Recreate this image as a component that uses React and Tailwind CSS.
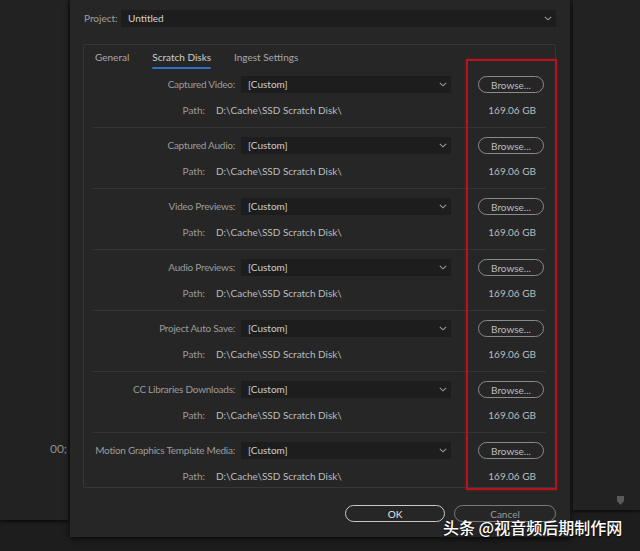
import React from "react";

const rows = [
  "Captured Video:",
  "Captured Audio:",
  "Video Previews:",
  "Audio Previews:",
  "Project Auto Save:",
  "CC Libraries Downloads:",
  "Motion Graphics Template Media:",
];

const Chevron = () => (
  <svg width="8" height="5" viewBox="0 0 8 5" className="shrink-0">
    <path d="M0.8 0.8 L4 3.8 L7.2 0.8" fill="none" stroke="#9a9a9a" strokeWidth="1.1" />
  </svg>
);

const DiskRow = ({ label, last }) => (
  <div className={`flex flex-col shrink-0 ${last ? "" : "border-b border-[#343434]"} mx-[9px] h-[61px]`}>
    <div className="flex items-center h-[17px] mt-[9px]">
      <div className="w-[142px] flex justify-end text-[#9c9c9c] whitespace-nowrap tracking-[-0.25px]">
        <span>{label}</span>
      </div>
      <div className="ml-[6px] w-[210px] h-[17px] bg-[#1d1d1d] flex items-center justify-between pl-[7px] pr-[4px] text-[#cfcfcf]">
        <span>[Custom]</span>
        <Chevron />
      </div>
      <button className="ml-[27px] w-[66px] h-[17px] rounded-full border border-[#8a8a8a] text-[#bdbdbd] flex items-center justify-center leading-none">
        Browse...
      </button>
    </div>
    <div className="flex items-center h-[14px] mt-[10px]">
      <div className="w-[112px] text-right text-[#9c9c9c]">Path:</div>
      <div className="ml-[11px] w-[210px] text-[#bdbdbd] whitespace-nowrap">D:\Cache\SSD Scratch Disk\</div>
      <div className="ml-[43px] w-[67px] text-right text-[#bdbdbd] whitespace-nowrap">169.06 GB</div>
    </div>
  </div>
);

export default function App() {
  return (
    <div
      className="relative w-[640px] h-[551px] overflow-hidden bg-[#1d1d1d] flex text-[10px]"
      style={{ fontFamily: "Lato, 'Noto Sans', sans-serif" }}
    >
      {/* left panel */}
      <div className="w-[68px] h-[520px] bg-[#222222] shrink-0 shadow-[0_2px_3px_rgba(0,0,0,0.6)] flex flex-col items-end pt-[440px] pr-[1px]">
        <span className="text-[#8e8e8e] text-[12px]">00;</span>
      </div>

      {/* dialog */}
      <div className="relative ml-[2px] w-[500px] h-[537px] bg-[#262626] shrink-0 shadow-[0_2px_6px_rgba(0,0,0,0.7)] flex flex-col">
        <div className="flex items-center mt-[10px] h-[17px]">
          <div className="ml-[14px] w-[35px] text-[#a0a0a0]">Project:</div>
          <div className="ml-[2px] w-[435px] h-[17px] bg-[#1d1d1d] flex items-center justify-between pl-[7px] pr-[4px] text-[#d2d2d2]">
            <span>Untitled</span>
            <Chevron />
          </div>
        </div>

        <div className="ml-[13px] mt-[17px] w-[473px] h-[444px] border border-[#363636] rounded-[2px] flex flex-col overflow-hidden">
          <div className="flex items-center h-[22px] shrink-0 pl-[11px] pt-[3px] gap-[23px]">
            <span className="text-[#a8a8a8]">General</span>
            <span className="relative text-[#cfcfcf]">
              Scratch Disks
              <span className="absolute left-0 right-0 -bottom-[4px] h-[2px] bg-[#2e6fc4] rounded"></span>
            </span>
            <span className="text-[#a8a8a8]">Ingest Settings</span>
          </div>
          {rows.map((r, i) => (
            <DiskRow key={r} label={r} last={i === rows.length - 1} />
          ))}
        </div>

        <div className="flex mt-[17px] ml-[275px] gap-[9px]">
          <button className="w-[100px] h-[17px] rounded-full border border-[#c8c8c8] text-[#e6e6e6] flex items-center justify-center leading-none">
            OK
          </button>
          <button className="w-[102px] h-[17px] rounded-full border border-[#7a7a7a] text-[#9a9a9a] flex items-center justify-center leading-none">
            Cancel
          </button>
        </div>

        {/* highlight box */}
        <div className="absolute left-[396px] top-[59px] w-[91px] h-[431px] border-2 border-[#b5141e] shadow-[0_0_3px_rgba(200,20,30,0.5)]"></div>
      </div>

      {/* right panel */}
      <div className="relative ml-[3px] w-[67px] h-[510px] bg-[#222222] shrink-0 shadow-[0_2px_3px_rgba(0,0,0,0.6)]">
        <svg className="absolute left-[44px] top-[496px]" width="7" height="9" viewBox="0 0 7 9">
          <path d="M0 0 H7 V5 L3.5 9 L0 5 Z" fill="#5a5a5a" />
        </svg>
      </div>

      {/* watermark */}
      <div
        className="absolute left-[443px] top-[516px] text-white text-[16px] leading-[22px] whitespace-nowrap font-medium [text-shadow:0_1px_2px_rgba(0,0,0,0.8)]"
        style={{ fontFamily: "'Noto Sans CJK SC', sans-serif" }}
      >
        头条 @视音频后期制作网
      </div>
    </div>
  );
}
